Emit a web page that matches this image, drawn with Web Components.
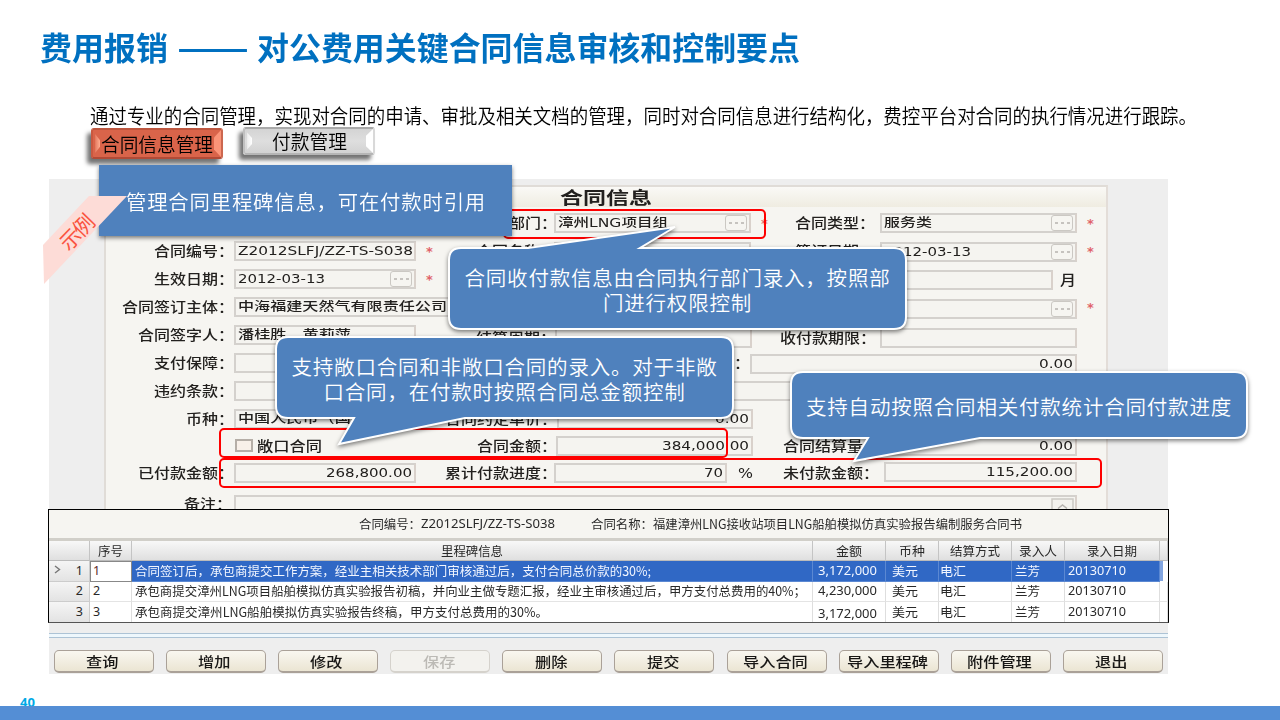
<!DOCTYPE html>
<html lang="zh-CN">
<head>
<meta charset="utf-8">
<title>费用报销</title>
<style>
  html, body { margin: 0; padding: 0; }
  body {
    width: 1280px;
    height: 720px;
    overflow: hidden;
    background: #fff;
    font-family: "Noto Sans CJK SC", sans-serif;
  }
</style>
</head>
<body>
<contract-slide></contract-slide>

<script>
// Text scaled horizontally so that it fills the given width
class StretchText extends HTMLElement {
  constructor() {
    super();
    this.attachShadow({ mode: 'open' });
  }

  connectedCallback() {
    const width = Number(this.getAttribute('width'));
    this.shadowRoot.innerHTML = `
      <style>
        :host { display: inline-block; width: ${width}px; white-space: nowrap; text-align: left; flex: none; }
        span { display: inline-block; transform-origin: 0 50%; }
      </style>
      <span><slot></slot></span>
    `;
    const span = this.shadowRoot.querySelector('span');
    const natural = span.getBoundingClientRect().width;
    if (natural > 0) span.style.transform = `scaleX(${width / natural})`;
  }
}
customElements.define('stretch-text', StretchText);

class BevelTab extends HTMLElement {
  constructor() {
    super();
    this.attachShadow({ mode: 'open' });
  }

  connectedCallback() {
    const active = this.hasAttribute('active');
    this.shadowRoot.innerHTML = `
      <style>
        :host { display: block; flex: none; width: 132px; height: ${active ? 31 : 28}px; }
        .tab {
          height: 100%;
          box-sizing: border-box;
          display: grid;
          grid-template-columns: 7px 1fr 7px;
          align-items: stretch;
          border-radius: 3px;
          background: ${active ? '#d9644a' : 'linear-gradient(#d4d4d4, #dedede 50%, #d2d2d2)'};
          border: 2px solid;
          border-color: ${active ? '#bd563f #cc674f #b24a36 #c9583f' : '#a9a9a9 #d9d9d9 #b5b5b5 #c0c0c0'};
          box-shadow: -4px 5px 4px rgba(0, 0, 0, 0.55);
        }
        .l, .r { background: linear-gradient(to right, ${active ? '#d9644a, #ffad91' : '#e6e6e6, #fff'}); }
        .l { clip-path: polygon(30% 15%, 100% 38%, 100% 62%, 30% 85%); }
        .r { background: ${active ? '#fa9478' : '#fff'}; clip-path: polygon(100% 0, 100% 100%, 0 72%, 0 28%); }
        .t {
          display: flex;
          align-items: center;
          justify-content: center;
          font-size: 19.5px;
          line-height: 24px;
          font-weight: 350;
          color: #000;
        }
      </style>
      <div class="tab"><i class="l"></i><div class="t"><slot></slot></div><i class="r"></i></div>
    `;
  }
}
customElements.define('bevel-tab', BevelTab);

class FormField extends HTMLElement {
  constructor() {
    super();
    this.attachShadow({ mode: 'open' });
  }

  connectedCallback() {
    this.shadowRoot.innerHTML = `
      <style>
        :host { display: block; flex: none; box-sizing: border-box; height: 20px; }
        .box {
          height: 20px;
          box-sizing: border-box;
          border: 2px solid #d4d1cd;
          border-right-color: #d9d1cb;
          display: flex;
          align-items: center;
          justify-content: ${this.hasAttribute('right') ? 'flex-end' : 'flex-start'};
          padding: 0 2px;
          background: #f5f4f0;
          line-height: 16px;
        }
        .more {
          margin-left: auto;
          width: 22px;
          height: 16px;
          box-sizing: border-box;
          border: 1.5px solid #cbc8c3;
          border-radius: 3px;
          background: #f6f5f1;
          display: flex;
          align-items: center;
          justify-content: center;
          gap: 3px;
        }
        .more i { width: 3px; height: 2px; background: #c6c3bf; }
        svg { margin: 4px -1px 0 auto; flex: none; }
      </style>
      <div class="box"><slot></slot>
        ${this.hasAttribute('more') ? '<div class="more"><i></i><i></i><i></i></div>' : ''}
        ${this.hasAttribute('scroll') ? `<svg width="23" height="20" viewBox="0 0 23 20">
          <path d="M1 20V2H22V20" fill="#f3f2ee" stroke="#ccc9c4" stroke-width="1.5"/>
          <path d="M7 11.5L11.5 8L16 11.5" fill="none" stroke="#b7b4b0" stroke-width="1.5"/></svg>` : ''}
      </div>
    `;
  }
}
customElements.define('form-field', FormField);

class ContractForm extends HTMLElement {
  constructor() {
    super();
    this.attachShadow({ mode: 'open' });
  }

  // Each item: [kind, left, width, text, textWidth, flags, dy]
  get rows() {
    return [
      [28, [['label', 509, 48, '部门：'], ['field', 554, 197, '漳州LNG项目组', 110, 'more'], ['star', 761], ['label', 795, 80, '合同类型：'], ['field', 880, 197, '服务类', 48, 'more'], ['star', 1087]]],
      [28, [['label', 154, 80, '合同编号：'], ['field', 234, 182, 'Z2012SLFJ/ZZ-TS-S038', 175, ''], ['star', 426], ['label', 476, 80, '合同名称：'], ['field', 554, 197, '', 0, '', 1], ['label', 795, 80, '签订日期：'], ['field', 880, 197, '2012-03-13', 87, 'more', 1], ['star', 1087]]],
      [28, [['label', 154, 80, '生效日期：'], ['field', 234, 182, '2012-03-13', 87, 'more'], ['star', 426], ['field', 880, 173, '', 0, '', 1], ['label', 1060, 16, '月', 0, '', 1]]],
      [28, [['label', 122, 112, '合同签订主体：'], ['field', 234, 517, '中海福建天然气有限责任公司', 209, ''], ['field', 880, 197, '', 0, 'more', 2], ['star', 1087]]],
      [28, [['label', 138, 96, '合同签字人：'], ['field', 234, 182, '潘桂胜、黄莉萍', 113, ''], ['label', 476, 80, '结算周期：', 0, '', 3], ['field', 555, 197, '', 0, '', 3], ['label', 780, 96, '收付款期限：', 0, '', 3], ['field', 880, 197, '', 0, '', 3]]],
      [28, [['label', 154, 80, '支付保障：'], ['field', 234, 182, '', 0, ''], ['label', 718, 32, '额：'], ['field', 750, 327, '0.00', 34, 'right', 1]]],
      [28, [['label', 154, 80, '违约条款：'], ['field', 234, 843, '', 0, '']]],
      [27, [['label', 186, 48, '币种：'], ['field', 234, 182, '中国人民币（国内）', 145, ''], ['label', 445, 112, '合同约定单价：'], ['field', 557, 196, '0.00', 34, 'right']]],
      [27, [['check', 235, 18], ['label', 257, 65, '敞口合同'], ['label', 477, 80, '合同金额：'], ['field', 556, 197, '384,000.00', 87, 'right'], ['label', 783, 96, '合同结算量：'], ['field', 884, 193, '0.00', 34, 'right']]],
      [28, [['label', 138, 96, '已付款金额：'], ['field', 234, 182, '268,800.00', 86, 'right'], ['label', 445, 112, '累计付款进度：'], ['field', 554, 173, '70', 19, 'right'], ['label', 738, 15, '%'], ['label', 783, 96, '未付款金额：'], ['field', 884, 193, '115,200.00', 87, 'right', -1]]],
      [34, [['label', 184, 48, '备注：'], ['field', 234, 843, '', 0, 'scroll', 1]]]
    ];
  }

  renderItem([kind, left, width, text, textWidth, flags, dy], gap) {
    const style = `margin-left:${gap}px;margin-top:${(dy || 0) * 2}px`;
    if (kind === 'star') return `<b class="star" style="${style}">*</b>`;
    if (kind === 'check') return `<i class="check" style="${style}"></i>`;
    if (kind === 'label') return `<stretch-text width="${width}" style="${style}">${text}</stretch-text>`;
    const value = text ? `<stretch-text width="${textWidth}">${text}</stretch-text>` : '';
    return `<form-field ${flags} style="${style};width:${width}px">${value}</form-field>`;
  }

  renderRow([height, items]) {
    let end = 106;
    const cells = items.map(item => {
      const gap = item[1] - end;
      end = item[1] + (item[0] === 'star' ? 8 : item[2]);
      return this.renderItem(item, gap);
    });
    return `<div class="row" style="height:${height}px">${cells.join('')}</div>`;
  }

  connectedCallback() {
    this.shadowRoot.innerHTML = `
      <style>
        :host {
          display: block;
          box-sizing: border-box;
          width: 1004px;
          height: 324px;
          overflow: hidden;
          background: #f6f5f1;
          border: 2px solid #e0dcd7;
          border-bottom: 0;
          border-right-color: #e3ddd8;
          color: #35332f;
        }
        h2 {
          margin: 0 0 2px;
          height: 20px;
          display: flex;
          justify-content: center;
          font: 700 17px/19px "Noto Sans CJK SC", sans-serif;
          color: #171614;
          background: linear-gradient(#faf9f6, #efece1);
        }
        .row { display: flex; align-items: center; font: 500 13.5px/20px "DejaVu Sans", "Noto Sans CJK SC", sans-serif; }
        stretch-text { color: #22201e; height: 20px; }
        form-field stretch-text { font-size: 12.5px; height: 16px; }
        .star { width: 8px; flex: none; color: #e0636a; font-size: 13px; height: 18px; }
        .check { width: 18px; height: 13px; box-sizing: border-box; border: 2px solid #b5aea7; background: #f8f0e9; }
      </style>
      <h2><stretch-text width="92">合同信息</stretch-text></h2>
      ${this.rows.map(row => this.renderRow(row)).join('')}
    `;
  }
}
customElements.define('contract-form', ContractForm);

class MilestoneTable extends HTMLElement {
  constructor() {
    super();
    this.attachShadow({ mode: 'open' });
  }

  connectedCallback() {
    const heads = [['', 0], ['序号', 25], ['里程碑信息', 62], ['金额', 26], ['币种', 26], ['结算方式', 50], ['录入人', 38], ['录入日期', 50], ['', 0]];
    const rows = [
      ['合同签订后，承包商提交工作方案，经业主相关技术部门审核通过后，支付合同总价款的30%;', 516, '3,172,000'],
      ['承包商提交漳州LNG项目船舶模拟仿真实验报告初稿，并向业主做专题汇报，经业主审核通过后，甲方支付总费用的40%；', 671, '4,230,000'],
      ['承包商提交漳州LNG船舶模拟仿真实验报告终稿，甲方支付总费用的30%。', 413, '3,172,000']
    ];
    this.shadowRoot.innerHTML = `
      <style>
        :host {
          display: block;
          box-sizing: border-box;
          width: 1121px;
          height: 114px;
          border: 1px solid #000;
          border-bottom-color: #555;
          background: #fff;
          overflow: hidden;
          font: 400 12.5px/20px "Noto Sans CJK SC", sans-serif;
          color: #292929;
        }
        .caption {
          height: 28px;
          display: flex;
          align-items: center;
          padding-left: 310px;
          line-height: 18px;
          background: #f6f5f1;
          border-bottom: 3px solid #d1cfc9;
        }
        .caption .gap { margin-left: 36px; }
        .num { font-family: "Noto Sans", "Noto Sans CJK SC", sans-serif; }
        .row { display: grid; grid-template-columns: 41px 42px 681px 73px 53px 73px 53px 95px 1fr; height: 20.5px; line-height: 18px; }
        .row > div { box-sizing: border-box; height: 20.5px; border-right: 1px solid #dedede; border-bottom: 1px solid #e4e4e4; padding-left: 3px; display: flex; align-items: center; white-space: nowrap; }
        .row.head, .row.head > div { height: 20px; }
        .head { background: linear-gradient(#f8f8f8, #dedede); }
        .head > div { justify-content: center; padding: 0; border-right: 1px solid #c4c4c4; border-bottom-color: #bbb; }
        .row > .mark { justify-content: space-between; padding: 0 6px 0 5px; background: linear-gradient(#f5f5f5, #e3e3e3); font-family: "Noto Sans", sans-serif; border-color: #ccc; }
        .sel > div { background: #3068c5; color: #f2f6ff; border-color: #5b88d2; }
        .row.sel > .mark { color: #292929; background: linear-gradient(#f5f5f5, #e3e3e3); }
        .sel > .edit { background: #fff; color: #5d2929; border: 1px solid #888; padding-left: 2px; }
        .sel > .last { background: linear-gradient(to right, #82a5e0 3px, #fff 3px); border-color: #fff; }
        .low { margin-top: 4px; }
        svg { flex: none; margin-bottom: 2px; }
      </style>
      <div class="caption">
        <stretch-text width="62">合同编号：</stretch-text>
        <stretch-text class="num" width="134">Z2012SLFJ/ZZ-TS-S038</stretch-text>
        <stretch-text class="gap" width="62">合同名称：</stretch-text>
        <stretch-text width="369">福建漳州LNG接收站项目LNG船舶模拟仿真实验报告编制服务合同书</stretch-text>
      </div>
      <div class="row head">${heads.map(([t, w]) => `<div>${t ? `<stretch-text width="${w}">${t}</stretch-text>` : ''}</div>`).join('')}</div>
      ${rows.map(([text, width, amount], i) => `
        <div class="row ${i === 0 ? 'sel' : ''}">
          <div class="mark">${i === 0 ? '<svg width="7" height="9" viewBox="0 0 7 9"><path d="M1 1L5.5 4.5L1 8" fill="none" stroke="#777" stroke-width="1.4"/></svg>' : '<span></span>'}<span>${i + 1}</span></div>
          <div class="edit num">${i + 1}</div>
          <div><stretch-text width="${width}">${text}</stretch-text></div>
          <div class="num" style="padding-left:5px"><stretch-text class="${i === 2 ? 'low' : ''}" width="59">${amount}</stretch-text></div>
          <div style="padding-left:6px"><stretch-text width="26">美元</stretch-text></div>
          <div style="padding-left:1px"><stretch-text width="26">电汇</stretch-text></div>
          <div><stretch-text width="25">兰芳</stretch-text></div>
          <div class="num"><stretch-text width="58">20130710</stretch-text></div>
          <div class="last"></div>
        </div>`).join('')}
    `;
  }
}
customElements.define('milestone-table', MilestoneTable);

class ActionBar extends HTMLElement {
  constructor() {
    super();
    this.attachShadow({ mode: 'open' });
  }

  connectedCallback() {
    const actions = ['查询', '增加', '修改', '保存', '删除', '提交', '导入合同', '导入里程碑', '附件管理', '退出'];
    this.shadowRoot.innerHTML = `
      <style>
        :host { display: block; padding-top: 10px; }
        .line { height: 3px; background: #eef7fc; border-top: 1px solid #adc3d5; border-bottom: 1px solid #adc3d5; }
        .bar { display: flex; gap: 12.1px; padding: 12px 0 0 5px; }
        button {
          width: 100px;
          height: 23px;
          flex: none;
          padding: 0;
          display: flex;
          align-items: center;
          justify-content: center;
          border: 1.5px solid #aaa198;
          border-bottom-width: 2px;
          border-radius: 5px;
          background: linear-gradient(#f9f7f0, #ebe5d3);
          font: 500 13.5px/18px "Noto Sans CJK SC", sans-serif;
          color: #181715;
        }
        button[disabled] { color: #bcbab5; border-color: #d5d2cc; background: #f3f2ee; }
        stretch-text { margin-right: 3px; margin-top: -1px; }
      </style>
      <div class="line"></div>
      <div class="bar">
        ${actions.map(a => `<button ${a === '保存' ? 'disabled' : ''}><stretch-text width="${a.length * 16.2}">${a}</stretch-text></button>`).join('')}
      </div>
    `;
  }
}
customElements.define('action-bar', ActionBar);

// Speech bubble; points are given in slide coordinates
class CallOut extends HTMLElement {
  constructor() {
    super();
    this.attachShadow({ mode: 'open' });
  }

  connectedCallback() {
    const [x, y, w, h] = this.getAttribute('box').split(' ').map(Number);
    const tail = (this.getAttribute('tail') || '').split(' ').filter(Boolean).map(Number);
    const r = tail.length ? 12 : 0;
    const join = (list) => list.map(([px, py]) => `L${px - x} ${py - y}`).join('');
    const [a, tx, ty, b] = tail;
    const top = tail.length && ty < y ? join([[a, y], [tx, ty], [b, y]]) : '';
    const bottom = tail.length && ty > y ? join([[b, y + h], [tx, ty], [a, y + h]]) : '';
    const d = `M${r} 0${top}L${w - r} 0Q${w} 0 ${w} ${r}V${h - r}Q${w} ${h} ${w - r} ${h}${bottom}L${r} ${h}Q0 ${h} 0 ${h - r}V${r}Q0 0 ${r} 0Z`;
    this.shadowRoot.innerHTML = `
      <style>
        :host {
          position: absolute;
          left: ${x}px;
          top: ${y}px;
          width: ${w}px;
          height: ${h}px;
          display: flex;
          align-items: center;
          justify-content: center;
          font: 350 20.5px/25px "Noto Sans CJK SC", sans-serif;
          letter-spacing: 0.8px;
          color: #fff;
          text-align: center;
        }
        svg { position: absolute; left: 0; top: 0; overflow: visible; filter: drop-shadow(0 2px 2px rgba(0, 0, 0, 0.5)); }
        div { position: relative; white-space: nowrap; top: ${this.getAttribute('shift') || 0}px; }
      </style>
      <svg width="${w}" height="${h}"><path d="${d}" fill="#4f81bd" stroke="${r ? '#fff' : 'none'}" stroke-width="2"/></svg>
      <div><slot></slot></div>
    `;
  }
}
customElements.define('call-out', CallOut);

class HighlightBox extends HTMLElement {
  constructor() {
    super();
    this.attachShadow({ mode: 'open' });
  }

  connectedCallback() {
    const [x, y, w, h] = this.getAttribute('box').split(' ');
    this.shadowRoot.innerHTML = `
      <style>
        :host {
          position: absolute;
          left: ${x}px;
          top: ${y}px;
          width: ${w}px;
          height: ${h}px;
          box-sizing: border-box;
          border: 2px solid #fe0000;
          border-radius: 5px;
        }
      </style>
    `;
  }
}
customElements.define('highlight-box', HighlightBox);

class SampleRibbon extends HTMLElement {
  constructor() {
    super();
    this.attachShadow({ mode: 'open' });
    this.shadowRoot.innerHTML = `
      <style>
        :host { position: absolute; left: 42px; top: 196px; width: 86px; height: 90px; }
        svg { display: block; }
        text { font: 400 21px "Noto Sans CJK SC", sans-serif; fill: #fa5340; }
      </style>
      <svg width="86" height="90" viewBox="0 0 86 90">
        <path d="M47 0H85L2 88L1 49Z" fill="#fddcd7"/>
        <text transform="translate(35 36) rotate(-46)" text-anchor="middle" y="8" textLength="40">示例</text>
      </svg>
    `;
  }
}
customElements.define('sample-ribbon', SampleRibbon);

class ContractSlide extends HTMLElement {
  constructor() {
    super();
    this.attachShadow({ mode: 'open' });
    this.shadowRoot.innerHTML = `
      <style>
        :host { display: flex; flex-direction: column; position: relative; width: 1280px; height: 720px; overflow: hidden; background: #fff; }
        h1 { margin: 0; padding: 23px 0 0 40px; height: 49px; display: flex; font-size: 32px; line-height: 46px; font-weight: 700; color: #0070c0; }
        h1 stretch-text:nth-child(2) { margin: 0 8px 0 9px; }
        p { margin: 0; padding: 30px 0 0 90px; height: 25px; font-size: 20px; line-height: 28px; font-weight: 350; color: #000; white-space: nowrap; }
        nav { display: flex; align-items: flex-start; gap: 20px; padding: 0 0 0 91px; height: 52px; }
        nav bevel-tab:first-child { margin-top: 1px; }
        .screen { margin-left: 49px; width: 1119px; height: 495px; background: #eee; }
        .screen contract-form { margin-left: 55px; }
        .screen milestone-table { margin-left: -1px; }
        .inset { padding-top: 6px; }
        footer { margin-top: auto; height: 30px; display: flex; flex-direction: column; justify-content: flex-end; }
        .page { height: 10px; overflow: hidden; padding-left: 20px; font: 700 13px/12px "Noto Sans", sans-serif; color: #00a9e6; }
        .bar { height: 14px; background: #548ed5; }
      </style>
      <h1><stretch-text width="128">费用报销</stretch-text><stretch-text width="72">——</stretch-text><stretch-text width="543">对公费用关键合同信息审核和控制要点</stretch-text></h1>
      <p><stretch-text width="1107">通过专业的合同管理，实现对合同的申请、审批及相关文档的管理，同时对合同信息进行结构化，费控平台对合同的执行情况进行跟踪。</stretch-text></p>
      <nav>
        <bevel-tab active><stretch-text width="112">合同信息管理</stretch-text></bevel-tab>
        <bevel-tab><stretch-text width="75">付款管理</stretch-text></bevel-tab>
      </nav>
      <div class="screen">
        <div class="inset"><contract-form></contract-form></div>
        <milestone-table></milestone-table>
        <action-bar></action-bar>
      </div>
      <footer><div class="page">40</div><div class="bar"></div></footer>

      <highlight-box box="503 209 263 30"></highlight-box>
      <highlight-box box="219 428 509 30"></highlight-box>
      <highlight-box box="219 458 883 30"></highlight-box>
      <call-out box="99 165 413 71" shift="1"><stretch-text width="360">管理合同里程碑信息，可在付款时引用</stretch-text></call-out>
      <sample-ribbon></sample-ribbon>
      <call-out box="449 248 457 81" tail="528 675 227 640" shift="1">合同收付款信息由合同执行部门录入，按照部<br>门进行权限控制</call-out>
      <call-out box="276 337 457 81" tail="354 339 444 465" shift="1">支持敞口合同和非敞口合同的录入。对于非敞<br>口合同，在付款时按照合同总金额控制</call-out>
      <call-out box="791 372 456 66" tail="868 854 461 980" shift="1">支持自动按照合同相关付款统计合同付款进度</call-out>
    `;
  }
}
customElements.define('contract-slide', ContractSlide);
</script>
</body>
</html>
